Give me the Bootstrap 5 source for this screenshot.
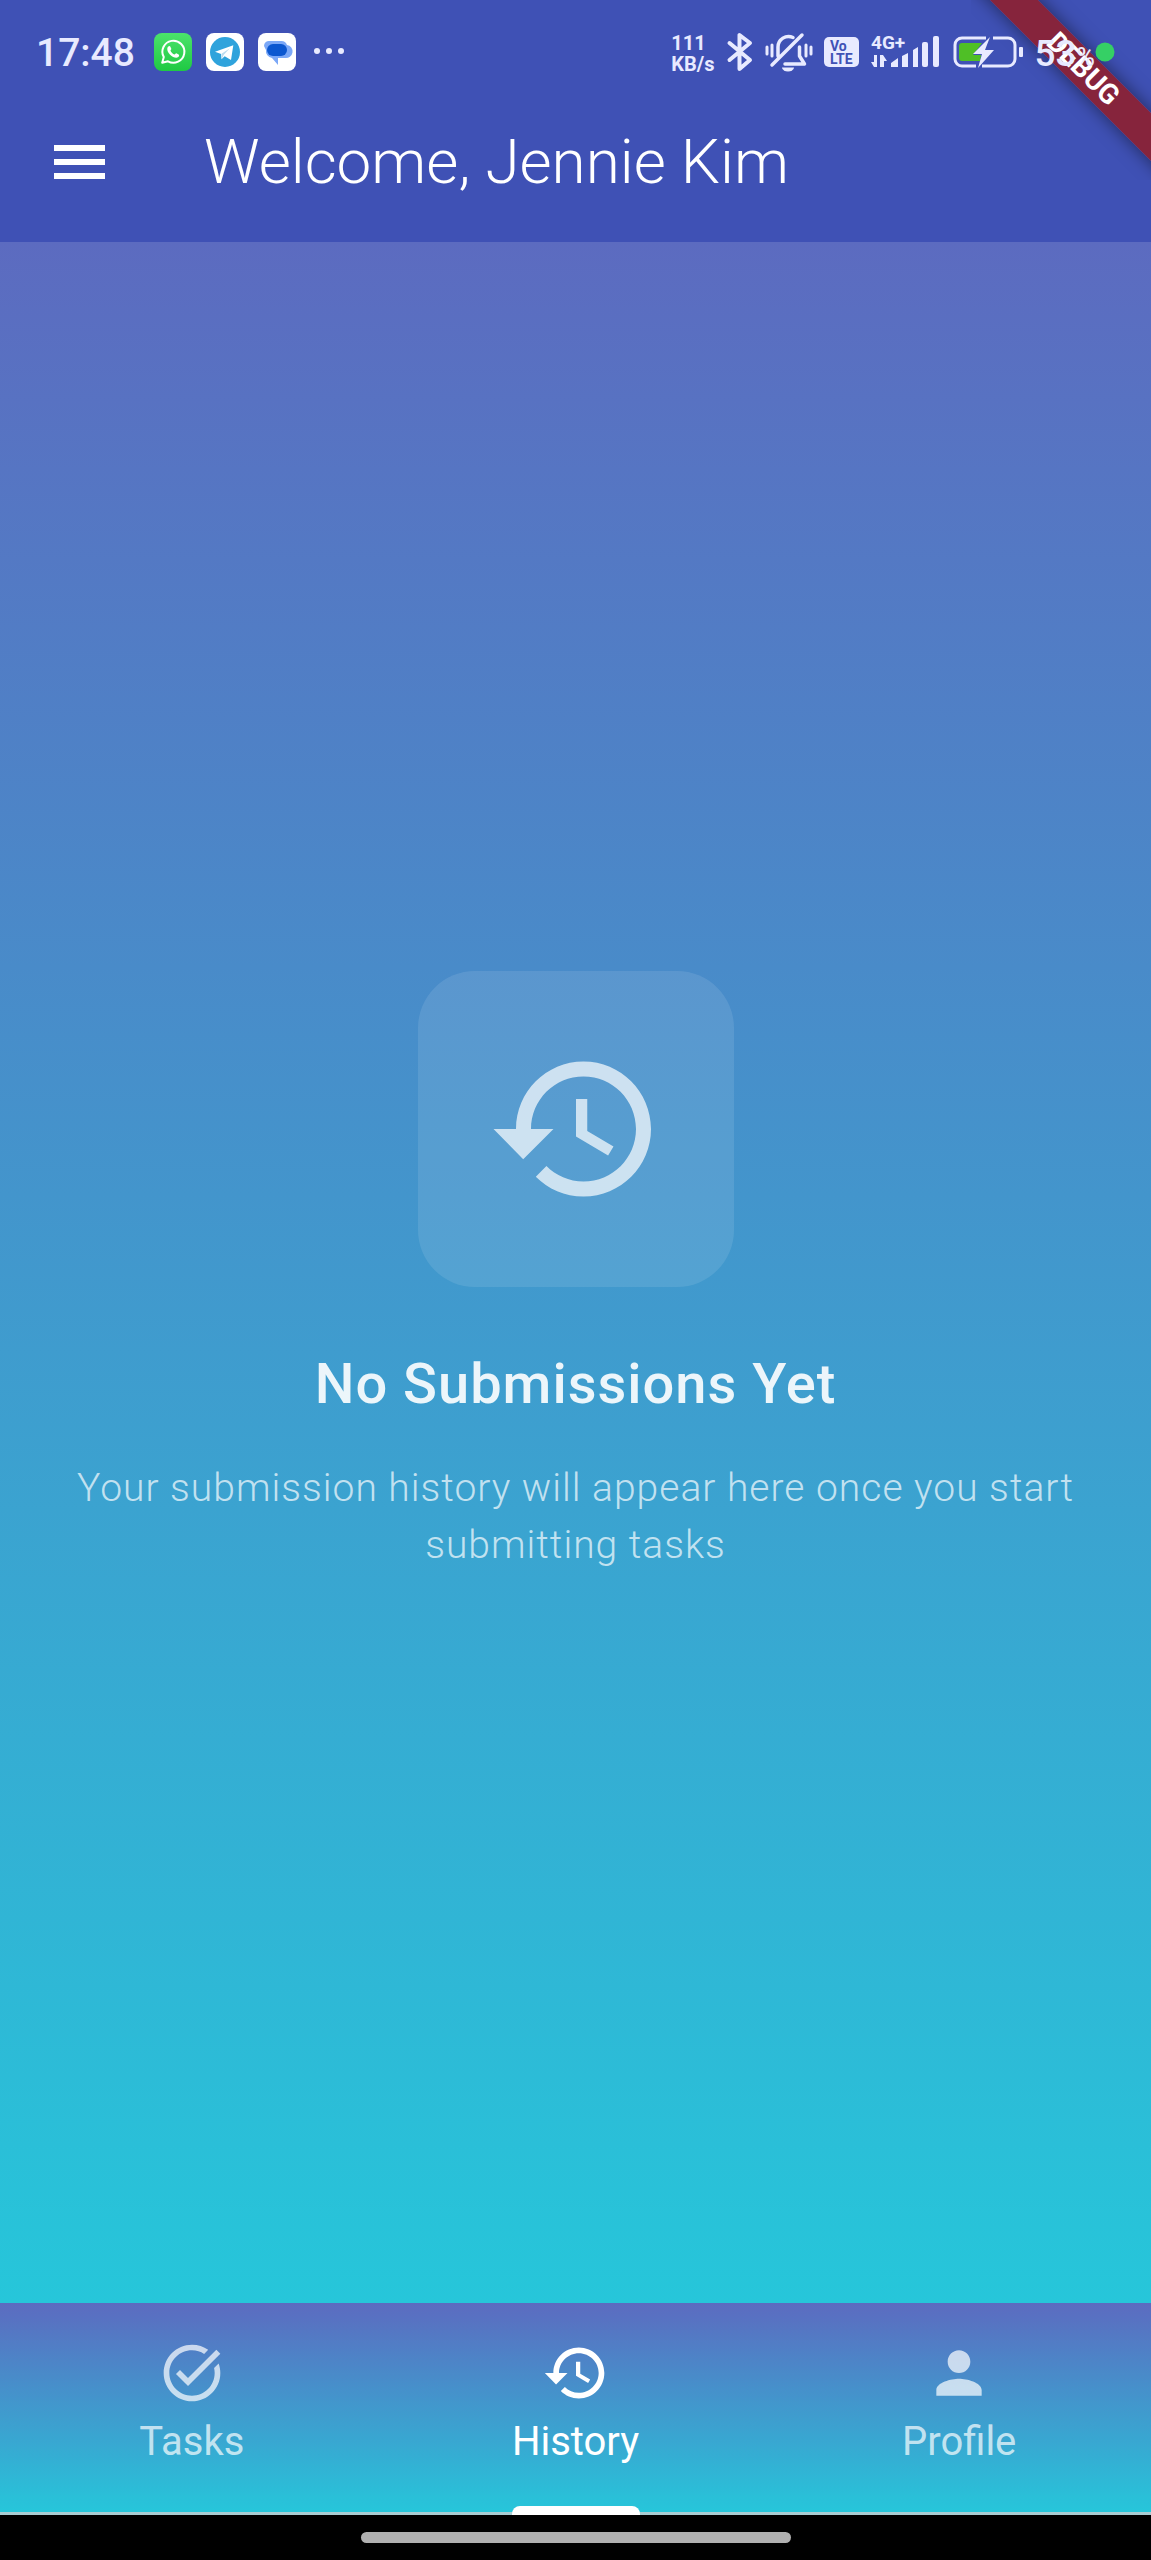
<!DOCTYPE html>
<html lang="en">
<head>
<meta charset="utf-8">
<meta name="viewport" content="width=device-width, initial-scale=1">
<title>Submission history</title>
<link href="https://cdn.jsdelivr.net/npm/bootstrap@5.3.0/dist/css/bootstrap.min.css" rel="stylesheet">
<style>
  :root { --indigo: #3f51b5; --fade: linear-gradient(180deg, #5c6bc0, #26c6da); }
  body { font-family: Roboto, "Noto Sans", sans-serif; background: #000; }
  .app-head { background: var(--indigo); height: 242px; }
  .status-bar { height: 104px; padding: 0 36px; line-height: 1; color: #e8eaff; z-index: 2; }
  .status-left { gap: 14px; }
  .clock { font-size: 39px; font-weight: 500; margin-right: 5px; padding-top: 2px; }
  .status-right { gap: 11px; }
  .net-speed { font-size: 20px; line-height: 21px; font-weight: 700; padding-top: 3px; }
  .battery-text { font-size: 37px; font-weight: 500; padding-top: 3px; }
  .battery-unit { font-size: 25px; }
  .toolbar { height: 116px; padding: 0 48px; gap: 93px; }
  .app-title { font-size: 62px; line-height: 72px; font-weight: 300; }
  .menu-btn { padding-top: 2px; }
  .debug-corner { width: 180px; height: 180px; pointer-events: none; z-index: 1; }
  .debug-band { top: 52px; left: -43px; width: 310px; height: 34px; line-height: 34px; font-size: 28px; font-weight: 700;
    background: rgba(139, 33, 52, .94); box-shadow: 0 0 18px rgba(0, 0, 0, .5); transform: rotate(45deg); }
  .empty-state { background: var(--fade); padding: 0 64px; }
  .history-tile { padding: 68px; border-radius: 57px; background: rgba(255, 255, 255, .1); margin-bottom: 64px; }
  .empty-title { font-size: 56px; line-height: 66px; font-weight: 500; letter-spacing: 1px; color: rgba(255, 255, 255, .9); margin-bottom: 43px; }
  .empty-note { font-size: 39px; line-height: 57px; font-weight: 300; letter-spacing: 1px; color: rgba(255, 255, 255, .7); }
  .tab-bar { background: var(--fade); height: 212px; border-bottom: 3px solid #a9cdd3; }
  .tab-link { color: rgba(255, 255, 255, .7); font-size: 40px; line-height: 46px; gap: 12px; padding-top: 36px; }
  .tab-link:hover { color: #fff; }
  .tab-link.active { color: #fff; }
  .tab-mark { left: 50%; bottom: -3px; width: 128px; height: 9px; margin-left: -64px; background: #fff; border-radius: 8px 8px 0 0; }
  .gesture-area { height: 45px; }
  .gesture-pill { width: 430px; height: 11px; background: #b0b0b0; }
</style>
</head>
<body class="d-flex flex-column min-vh-100 position-relative overflow-x-hidden">

<header class="app-head flex-shrink-0">
  <div class="status-bar position-relative d-flex align-items-center justify-content-between">
    <div class="status-left d-flex align-items-center">
      <span class="clock">17:48</span>
      <svg width="38" height="38" viewBox="0 0 38 38" role="img" aria-label="WhatsApp">
        <defs><linearGradient id="wa" x1="0" y1="0" x2="0" y2="1"><stop offset="0" stop-color="#4be36b"/><stop offset="1" stop-color="#1fc943"/></linearGradient></defs>
        <rect width="38" height="38" rx="8" fill="url(#wa)"/>
        <path d="M8.200 29.800l1.600-5.700a11 11 0 1 1 4.200 4.200z" fill="none" stroke="#fff" stroke-width="2" stroke-linejoin="round"/>
        <path d="M14.300 13.500c.9-.9 1.700-.7 2.100.2l.9 2.100c.2.600-.9 1.500-.8 1.900.8 1.800 2.200 3.100 4 3.800.5.200 1.300-1.400 1.900-1.200l2.200 1.100c1 .5.500 2.200-.7 2.900-3.600 2-11.300-4.300-10.600-8.900.1-.7.500-1.400 1-1.900z" fill="#fff"/>
      </svg>
      <svg width="38" height="38" viewBox="0 0 38 38" role="img" aria-label="Telegram">
        <rect width="38" height="38" rx="8" fill="#fff"/><circle cx="19" cy="19" r="15" fill="#2fa3dc"/>
        <path d="M9 18.800L27.300 12.300l-2.300 14.600-6.300-3.600-3.200 2.900-.4-5.300z" fill="#fff"/><path d="M15.500 20.800l8.300-5.600-6.200 6.700-1.300 3.400z" fill="#bcdcef"/>
      </svg>
      <svg width="38" height="38" viewBox="0 0 38 38" role="img" aria-label="Messages">
        <rect width="38" height="38" rx="8" fill="#fff"/>
        <path d="M12 8h11a6 6 0 0 1 6 4 6.500 6.500 0 0 1-2 13h-7v7l-6-7a7 7 0 0 1-6-8l-2-4a5 5 0 0 1 6-5z" fill="#7ba8f7"/>
        <rect x="9" y="11" width="20" height="12" rx="6" fill="#0b57d0"/>
      </svg>
      <svg width="38" height="38" viewBox="0 0 38 38" fill="#e8eaff" aria-hidden="true"><circle cx="7" cy="18" r="3"/><circle cx="19" cy="18" r="3"/><circle cx="31" cy="18" r="3"/></svg>
    </div>
    <div class="status-right d-flex align-items-center">
      <span class="net-speed">111<br>KB/s</span>
      <svg width="28" height="40" viewBox="0 0 28 40" fill="none" stroke="#e8eaff" stroke-width="4" stroke-linejoin="round" stroke-linecap="round" role="img" aria-label="Bluetooth"><path d="M3.500 28L24 11 13.500 3V37L24 28 3.500 11"/></svg>
      <svg width="48" height="40" viewBox="0 0 48 40" fill="none" stroke="#e8eaff" stroke-width="3.500" stroke-linecap="round" stroke-linejoin="round" role="img" aria-label="Silent">
        <path d="M13 24V15a10.500 10.500 0 0 1 15-9.500M34.500 15v9l5 8H20M7 33L37 3"/><path d="M17 35.500h12a6 4 0 0 1-12 0z" fill="#e8eaff" stroke="none"/><path d="M2 15v7M7 13v11M41 13v11M46 15v7" stroke-width="3"/>
      </svg>
      <svg width="36" height="32" viewBox="0 0 36 32" role="img" aria-label="VoLTE"><rect y="1" width="35" height="30" rx="5" fill="#e8eaff"/><g fill="#3f51b5" font-family="Roboto, sans-serif" font-weight="700" font-size="14"><text x="6" y="15">Vo</text><text x="6" y="28">LTE</text></g></svg>
      <svg width="70" height="46" viewBox="0 -6 70 46" fill="#e8eaff" role="img" aria-label="Mobile signal">
        <text x="0" y="14" font-family="Roboto, sans-serif" font-weight="700" font-size="19">4G+</text>
        <path d="M6 20v12h-3l-3-5h3v-7zM9 32V20h3l4 6h-3v6zM20 32v-4l7-5v9zM31 32V21l6-3v14zM42 32V15l5-3v20z"/>
        <rect x="51" y="7" width="6" height="25" rx="2"/><rect x="62" y="1" width="6" height="31" rx="2"/>
      </svg>
      <svg width="72" height="34" viewBox="0 0 72 34" role="img" aria-label="Battery charging">
        <path d="M34 3H10a7 7 0 0 0-7 7v14a7 7 0 0 0 7 7h14M41 3h15a7 7 0 0 1 7 7v14a7 7 0 0 1-7 7H30" fill="none" stroke="#e8eaff" stroke-width="3"/>
        <path d="M10 8h20l-9 12h8l-1 6H10a3 3 0 0 1-3-3V11a3 3 0 0 1 3-3z" fill="#4fbf26"/>
        <path d="M38 2L21 19h9l-4 14 16-18h-9z" fill="#e8eaff"/><rect x="67" y="12" width="4" height="10" rx="1" fill="#e8eaff"/>
      </svg>
      <div class="d-flex align-items-center">
        <span class="battery-text">53<span class="battery-unit">%</span></span>
        <svg width="20" height="20" viewBox="0 0 20 20" aria-hidden="true"><circle cx="10" cy="10" r="9.500" fill="#35d065"/></svg>
      </div>
    </div>
  </div>
  <div class="toolbar d-flex align-items-center">
    <button type="button" class="btn menu-btn px-0 pb-0 border-0 d-flex" aria-label="Open menu">
      <svg width="63" height="36" viewBox="0 0 63 36" fill="#fff"><path d="M6 0h51v6H6zM6 14h51v6H6zM6 28h51v6H6z"/></svg>
    </button>
    <h1 class="app-title text-white m-0">Welcome, Jennie Kim</h1>
  </div>
</header>

<div class="debug-corner position-absolute top-0 end-0 overflow-hidden"><div class="debug-band position-absolute text-white text-center">DEBUG</div></div>

<main class="empty-state flex-grow-1 d-flex flex-column align-items-center justify-content-center text-center">
  <div class="history-tile">
    <svg class="d-block" width="180" height="180" viewBox="0 0 24 24" fill="#fff" fill-opacity=".7" aria-hidden="true"><path d="M13 3c-4.970 0-9 4.030-9 9H1l3.960 4.030L9 12H6c0-3.870 3.130-7 7-7s7 3.130 7 7-3.130 7-7 7c-1.930 0-3.680-.79-4.940-2.060l-1.420 1.420C8.270 19.990 10.510 21 13 21c4.970 0 9-4.030 9-9s-4.030-9-9-9zm-1 5v5l4.280 2.540.72-1.210-3.500-2.080V8H12z"/></svg>
  </div>
  <h2 class="empty-title">No Submissions Yet</h2>
  <p class="empty-note m-0">Your submission history will appear here once you start submitting tasks</p>
</main>

<nav class="tab-bar nav nav-fill flex-nowrap flex-shrink-0" aria-label="Main">
  <a href="#" class="tab-link col text-decoration-none d-flex flex-column align-items-center">
    <svg width="68" height="68" viewBox="0 0 24 24" fill="currentColor" aria-hidden="true"><path d="M22 5.180L10.590 16.600l-4.240-4.240 1.410-1.410 2.830 2.830 10-10L22 5.180zm-2.210 5.040c.13.570.21 1.170.21 1.780 0 4.420-3.580 8-8 8s-8-3.580-8-8 3.580-8 8-8c1.580 0 3.040.46 4.280 1.250l1.440-1.440C16.100 2.670 14.130 2 12 2 6.480 2 2 6.480 2 12s4.480 10 10 10 10-4.480 10-10c0-1.190-.22-2.330-.6-3.390l-1.610 1.610z"/></svg>
    <span>Tasks</span>
  </a>
  <a href="#" class="tab-link active col text-decoration-none d-flex flex-column align-items-center position-relative" aria-current="page">
    <svg width="68" height="68" viewBox="0 0 24 24" fill="currentColor" aria-hidden="true"><path d="M13 3c-4.970 0-9 4.030-9 9H1l3.960 4.030L9 12H6c0-3.870 3.130-7 7-7s7 3.130 7 7-3.130 7-7 7c-1.930 0-3.680-.79-4.940-2.060l-1.420 1.420C8.270 19.990 10.510 21 13 21c4.970 0 9-4.030 9-9s-4.030-9-9-9zm-1 5v5l4.280 2.540.72-1.210-3.500-2.080V8H12z"/></svg>
    <span>History</span>
    <span class="tab-mark position-absolute"></span>
  </a>
  <a href="#" class="tab-link col text-decoration-none d-flex flex-column align-items-center">
    <svg width="68" height="68" viewBox="0 0 24 24" fill="currentColor" aria-hidden="true"><path d="M12 12c2.210 0 4-1.790 4-4s-1.790-4-4-4-4 1.790-4 4 1.790 4 4 4zm0 2c-2.670 0-8 1.340-8 4v2h16v-2c0-2.660-5.330-4-8-4z"/></svg>
    <span>Profile</span>
  </a>
</nav>
<div class="gesture-area d-flex align-items-center justify-content-center flex-shrink-0"><div class="gesture-pill rounded-pill"></div></div>

<script src="https://cdn.jsdelivr.net/npm/bootstrap@5.3.0/dist/js/bootstrap.bundle.min.js"></script>
</body>
</html>
